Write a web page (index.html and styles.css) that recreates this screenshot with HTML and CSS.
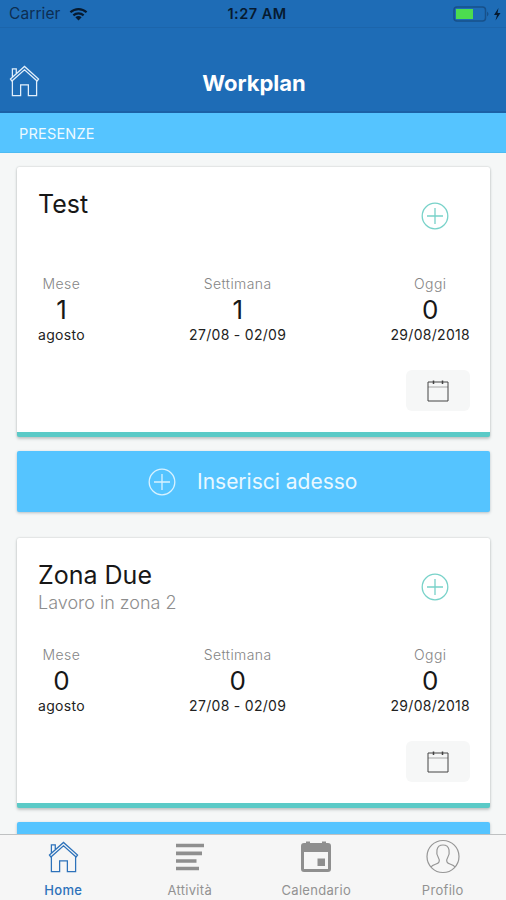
FILE: index.html
```html
<!DOCTYPE html>
<html lang="it">
<head>
<meta charset="utf-8">
<title>Workplan</title>
<link rel="stylesheet" href="styles.css">
</head>
<body>
<svg class="defs" aria-hidden="true">
  <symbol id="home" viewBox="0 0 32 34"><path d="M1.5 15 16 2l14.500 13-1.500 2L16 5.500 3 17zM3.500 13V4.500h4v5M3.500 17v15H12V21h8v11h8.500V17"/></symbol>
  <symbol id="plus" viewBox="0 0 28 28"><circle cx="14" cy="14" r="12.800"/><path d="M14 6v16M6 14h16"/></symbol>
  <symbol id="calendar" viewBox="0 0 22 22"><path d="M1 2h20v19H1z"/><path d="M1 7h20" opacity=".45"/><path d="M6.500 .5V4M15.500 .5V4" stroke-width="1.500"/></symbol>
</svg>
<div class="app">
  <header class="header">
    <div class="status">
      <div class="network"><span class="carrier">Carrier</span>
        <svg class="wifi" viewBox="0 0 20 14"><path d="M1.500 5.200a12.300 12.300 0 0 1 17 0M4.600 8.400a8 8 0 0 1 10.800 0" fill="none" stroke="#061a30" stroke-width="2.300"/><path d="M6.700 10.500a5 5 0 0 1 6.600 0L10 13.800z" fill="#061a30"/></svg>
      </div>
      <span class="time">1:27 AM</span>
      <svg class="battery" viewBox="0 0 48 18"><rect x="1" y="2" width="31.500" height="14" rx="3" fill="none" stroke="#17508a" stroke-width="1.500"/><path d="M34 6.500q3 2.500 0 5z" fill="#17508a"/><rect x="3" y="4" width="17" height="10" fill="#4cdc50"/><path d="M45.500 3 41 10h3l-1.500 5.500L47.500 8h-3z" fill="#061a30"/></svg>
    </div>
    <div class="navbar">
      <svg class="nav-home"><use href="#home"/></svg>
      <h1>Workplan</h1>
    </div>
  </header>
  <div class="section">PRESENZE</div>
  <main class="content">
    <article class="card">
      <div class="card-head"><div><h2 class="short">Test</h2></div><svg class="plus add"><use href="#plus"/></svg></div>
      <div class="stats">
        <div class="stat"><span class="label">Mese</span><span class="num">1</span><span class="period">agosto</span></div>
        <div class="stat"><span class="label">Settimana</span><span class="num">1</span><span class="period">27/08 - 02/09</span></div>
        <div class="stat"><span class="label">Oggi</span><span class="num">0</span><span class="period">29/08/2018</span></div>
      </div>
      <div class="calendar-button"><svg><use href="#calendar"/></svg></div>
    </article>
    <div class="insert"><svg class="plus"><use href="#plus"/></svg><span>Inserisci adesso</span></div>
    <article class="card">
      <div class="card-head"><div><h2>Zona Due</h2><p>Lavoro in zona 2</p></div><svg class="plus add"><use href="#plus"/></svg></div>
      <div class="stats">
        <div class="stat"><span class="label">Mese</span><span class="num">0</span><span class="period">agosto</span></div>
        <div class="stat"><span class="label">Settimana</span><span class="num">0</span><span class="period">27/08 - 02/09</span></div>
        <div class="stat"><span class="label">Oggi</span><span class="num">0</span><span class="period">29/08/2018</span></div>
      </div>
      <div class="calendar-button"><svg><use href="#calendar"/></svg></div>
    </article>
    <div class="insert"></div>
  </main>
  <nav class="tabs">
    <div class="tab active"><svg class="tab-home"><use href="#home"/></svg><span>Home</span></div>
    <div class="tab"><svg viewBox="0 0 34 36"><path d="M3 6.500h28M3 14.300h26M3 22h20.500M3 29.500h23" fill="none" stroke="#8f8f8f" stroke-width="3.700"/></svg><span>Attività</span></div>
    <div class="tab"><svg viewBox="0 0 34 36"><path fill="#8f8f8f" fill-rule="evenodd" d="M7 2.500h4V4h12V2.500h4V4h2q3 0 3 3v23q0 3-3 3H5q-3 0-3-3V7q0-3 3-3h2zM5 13v17h24V13zM18.500 19.500H26V27h-7.500z"/></svg><span>Calendario</span></div>
    <div class="tab"><svg viewBox="0 0 34 36"><g fill="none" stroke="#969696" stroke-width="1.200"><circle cx="17" cy="17.500" r="16"/><path d="M5 28c2-3 7-2.500 8-5 .6-1.500.3-3-.7-4.500C10 15 9.500 6 17 6s7 9 4.700 12.500c-1 1.500-1.300 3-.7 4.500 1 2.500 6 2 8 5"/></g></svg><span>Profilo</span></div>
  </nav>
</div>
</body>
</html>
```
FILE: styles.css
```css
* { box-sizing: border-box; }
body, h1, h2, p { margin: 0; }
body { font-family: Inter, "Liberation Sans", sans-serif; overflow: hidden; }
svg { display: block; flex: none; }
.defs { display: none; }
.app { width: 506px; height: 900px; display: flex; flex-direction: column; background: #f5f7f7; }
.header { height: 113px; flex: none; background: #1e6cb6; border-bottom: 2px solid #1b61a6; }
.status { height: 28px; padding: 0 5px 0 9px; display: grid; grid-template-columns: 1fr auto 1fr; align-items: center; color: #061a30; border-bottom: 1px solid #1c65ab; }
.network { display: flex; align-items: center; gap: 8px; }
.carrier { font-size: 15.500px; letter-spacing: .1px; color: #0d2e52; }
.wifi { width: 19px; height: 14px; }
.time { font-size: 14.500px; font-weight: 600; letter-spacing: .5px; padding-left: 4px; }
.battery { width: 48px; height: 18px; justify-self: end; }
.navbar { height: 83px; padding: 28px 9px 0; display: grid; grid-template-columns: 32px 1fr 32px; }
.nav-home { width: 31px; height: 34px; margin-top: 8px; fill: none; stroke: #e2effb; stroke-width: 1.300; }
h1 { text-align: center; color: #fff; font-size: 22px; line-height: 54px; font-weight: 700; padding-left: 2px; }
.section { height: 40px; flex: none; padding-left: 19px; line-height: 41px; background: #55c4ff; color: #eefaff; font-size: 14.500px; letter-spacing: .2px; border-bottom: 1px solid #4dbbf3; }
.content { flex: 1; min-height: 0; padding: 14px 16px 0 17px; overflow: hidden; }
.card { height: 270px; padding: 20px 20px 0 21px; background: #fff; border-bottom: 5px solid #5bcac7; border-radius: 2px; box-shadow: 0 0 2px #b9bebe, 0 2px 3px #c5caca; }
.card-head { height: 87px; display: flex; justify-content: space-between; }
h2 { font-size: 25px; line-height: 34px; font-weight: 400; color: #171717; }
.card-head p { font-size: 18px; line-height: 22px; font-weight: 300; color: #8d8d8d; }
.plus { width: 28px; height: 28px; fill: none; stroke: #d9f2ff; stroke-width: 1.300; }
.add { margin: 15px 21px 0 0; stroke: #78d2c9; }
.stats { height: 96px; display: flex; justify-content: space-between; }
.stat { display: flex; flex-direction: column; align-items: center; }
.label { font-size: 14px; line-height: 20px; letter-spacing: .4px; font-weight: 300; color: #858585; }
.num { font-size: 26px; line-height: 32px; color: #171717; }
.period { font-size: 14px; line-height: 18px; letter-spacing: .3px; color: #222; }
.calendar-button { width: 64px; height: 41px; margin-left: auto; display: grid; place-items: center; background: #f6f7f7; border-radius: 6px; }
.calendar-button svg { width: 22px; height: 22px; fill: none; stroke: #444; }
.insert { height: 61px; margin: 14px 0 26px; display: flex; align-items: center; padding-left: 131px; gap: 21px; background: #55c4ff; border-radius: 2px; box-shadow: 0 1px 3px #b5bfc3; color: #e9f8ff; font-size: 21px; }
.tabs { height: 66px; flex: none; display: grid; grid-template-columns: repeat(4, 1fr); border-top: 1px solid #bfc1c2; background: #f6f6f6; }
.tab { display: flex; flex-direction: column; align-items: center; padding-top: 4px; color: #929292; font-size: 13px; letter-spacing: .3px; line-height: 24px; }
.tab svg { width: 34px; height: 36px; margin-bottom: 3px; }
.tab .tab-home { width: 31px; height: 34px; margin: 1px 0 4px; fill: none; stroke: #2d72ba; stroke-width: 1.300; }
.active { color: #2d72ba; font-weight: 500; }
```
